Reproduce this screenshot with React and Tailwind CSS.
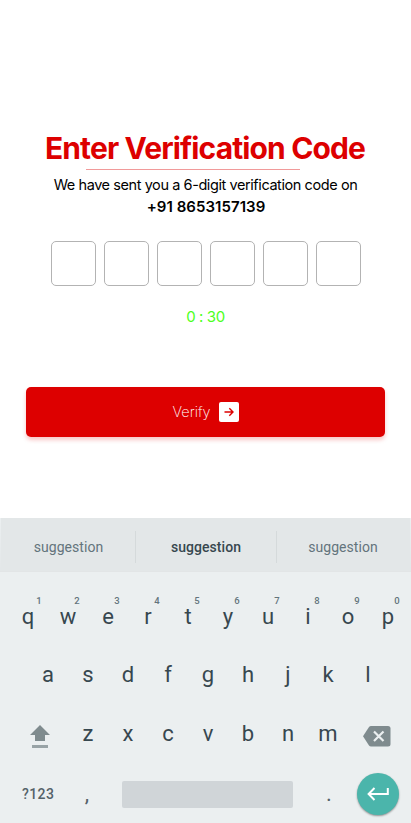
import React from "react";

const topRow = ["q", "w", "e", "r", "t", "y", "u", "i", "o", "p"];
const homeRow = ["a", "s", "d", "f", "g", "h", "j", "k", "l"];
const bottomRow = ["z", "x", "c", "v", "b", "n", "m"];

function Key({ children }) {
  return <span className="w-10 shrink-0 text-center text-[22px] leading-6 text-[#37474f]">{children}</span>;
}

function Keyboard() {
  return (
    <section className="h-[305px] overflow-hidden bg-[#ebeff0] font-['Roboto',sans-serif]">
      <div className="h-[54px] border-b border-[#e2e5e6] bg-[#e3e7e8] [clip-path:polygon(1px_0,410px_0,411px_100%,0_100%)]">
        <div className="flex h-[53px] items-center pt-[5px] text-sm text-[#63747c]">
          <span className="w-[135px] pl-[2px] text-center tracking-[0.06px]">suggestion</span>
          <span className="h-8 w-px bg-[#d5dadb]" />
          <span className="w-[140px] text-center font-medium tracking-[0.06px] text-[#37474f]">suggestion</span>
          <span className="h-8 w-px bg-[#d5dadb]" />
          <span className="w-[134px] pr-[2px] text-center tracking-[0.06px]">suggestion</span>
        </div>
      </div>
      <div className="flex pl-[17px] pt-[23px] text-[9.5px] font-medium leading-3 text-[#63747c]">
        {topRow.map((letter, i) => (
          <span key={letter} className="h-3 w-10 shrink-0 text-center first:pl-1">{(i + 1) % 10}</span>
        ))}
      </div>
      <div className="-mt-[2px] flex pl-[8px]">
        {topRow.map((letter) => <Key key={letter}>{letter}</Key>)}
      </div>
      <div className="mt-[34px] flex pl-[28px]">
        {homeRow.map((letter) => <Key key={letter}>{letter}</Key>)}
      </div>
      <div className="mt-[35px] flex h-6">
        <svg className="ml-[29px] mt-[3px] h-6 w-[22px] shrink-0" viewBox="0 0 22 24">
          <path d="M11 0 21 10H16V16H6V10H1Z" fill="#7f8b8e" />
          <path d="M3 20H19V23H3Z" fill="#98a3a6" />
        </svg>
        <div className="ml-[17px] flex">
          {bottomRow.map((letter) => <Key key={letter}>{letter}</Key>)}
        </div>
        <svg className="ml-[14px] mt-[3px] h-[22px] w-[30px] shrink-0" viewBox="0 0 30 22">
          <path d="M9 1H26Q28.5 1 28.5 3.5V19Q28.5 21.5 26 21.5H9Q7.8 21.5 7 20.4L1 11.2 7 2.1Q7.8 1 9 1Z" fill="#7f8b8e" />
          <path d="m12 6.5 9.5 9.5m0-9.5L12 16" fill="none" stroke="#ebeff0" strokeWidth="2.2" />
        </svg>
      </div>
      <div className="mt-[23px] flex h-[50px] items-center text-[#546269]">
        <span className="ml-[22px] w-[40px] text-sm font-medium tracking-[0.4px]">?123</span>
        <span className="ml-[5px] w-10 text-center text-[22px] leading-6">,</span>
        <span className="ml-[15px] h-[27px] w-[171px] rounded-[2px] bg-[#d0d5d8]" />
        <span className="ml-[16px] w-10 text-center text-[22px] leading-6">.</span>
        <span className="mb-px ml-[8px] flex size-[42px] items-center justify-center rounded-full bg-[#4bb5ab] shadow-[0_1px_2px_rgba(0,0,0,0.4)]">
          <svg className="mt-px h-[14px] w-[22px]" viewBox="0 0 22 14">
            <path d="M20.8 1V7H2M7.5 1 1.6 7 7.5 13" fill="none" stroke="white" strokeWidth="2" />
          </svg>
        </span>
      </div>
    </section>
  );
}

export default function App() {
  return (
    <main className="flex h-[823px] w-[411px] flex-col overflow-hidden bg-white font-['Inter',sans-serif]">
      <div className="flex h-[518px] shrink-0 flex-col items-center pt-[130px]">
        <h1 className="whitespace-nowrap pr-px text-[30px] font-bold leading-9 tracking-[-0.87px] text-[#dd0000]">Enter Verification Code</h1>
        <div className="mr-[25px] mt-[3px] h-px w-[214px] bg-[#f19a9a]" />
        <p className="mt-[4px] whitespace-nowrap text-[14.5px] leading-[22px] tracking-[-0.42px] text-black">We have sent you a 6-digit verification code on</p>
        <p className="pl-px text-[15px] font-semibold leading-[22px] tracking-[0.06px] text-black">+91 8653157139</p>
        <div className="mt-[23px] flex gap-2">
          {[1, 2, 3, 4, 5, 6].map((n) => (
            <input key={n} aria-label={`Digit ${n}`} maxLength={1} className="size-[45px] rounded-[5px] border border-[#b3b3b3] bg-white text-center outline-none" />
          ))}
        </div>
        <p className="mt-[20px] text-[15px] leading-[22px] tracking-[-0.4px] text-[#4cff20]">0 : 30</p>
        <button className="mt-[59px] flex h-[50px] w-[359px] items-center justify-center gap-2 rounded-[5px] bg-[#dd0000] text-[15px] text-white shadow-[0_3px_4px_rgba(221,0,0,0.22)]">
          <span className="w-[38px] whitespace-nowrap text-[14.5px] font-extralight">Verify</span>
          <span className="flex size-5 items-center justify-center rounded-[2px] bg-white">
            <svg className="size-5" viewBox="0 0 20 20" fill="none" stroke="#dd0000" strokeWidth="1.4">
              <path d="M5.5 10H14M10.3 6.2 14 10l-3.7 3.8" />
            </svg>
          </span>
        </button>
      </div>
      <Keyboard />
    </main>
  );
}
